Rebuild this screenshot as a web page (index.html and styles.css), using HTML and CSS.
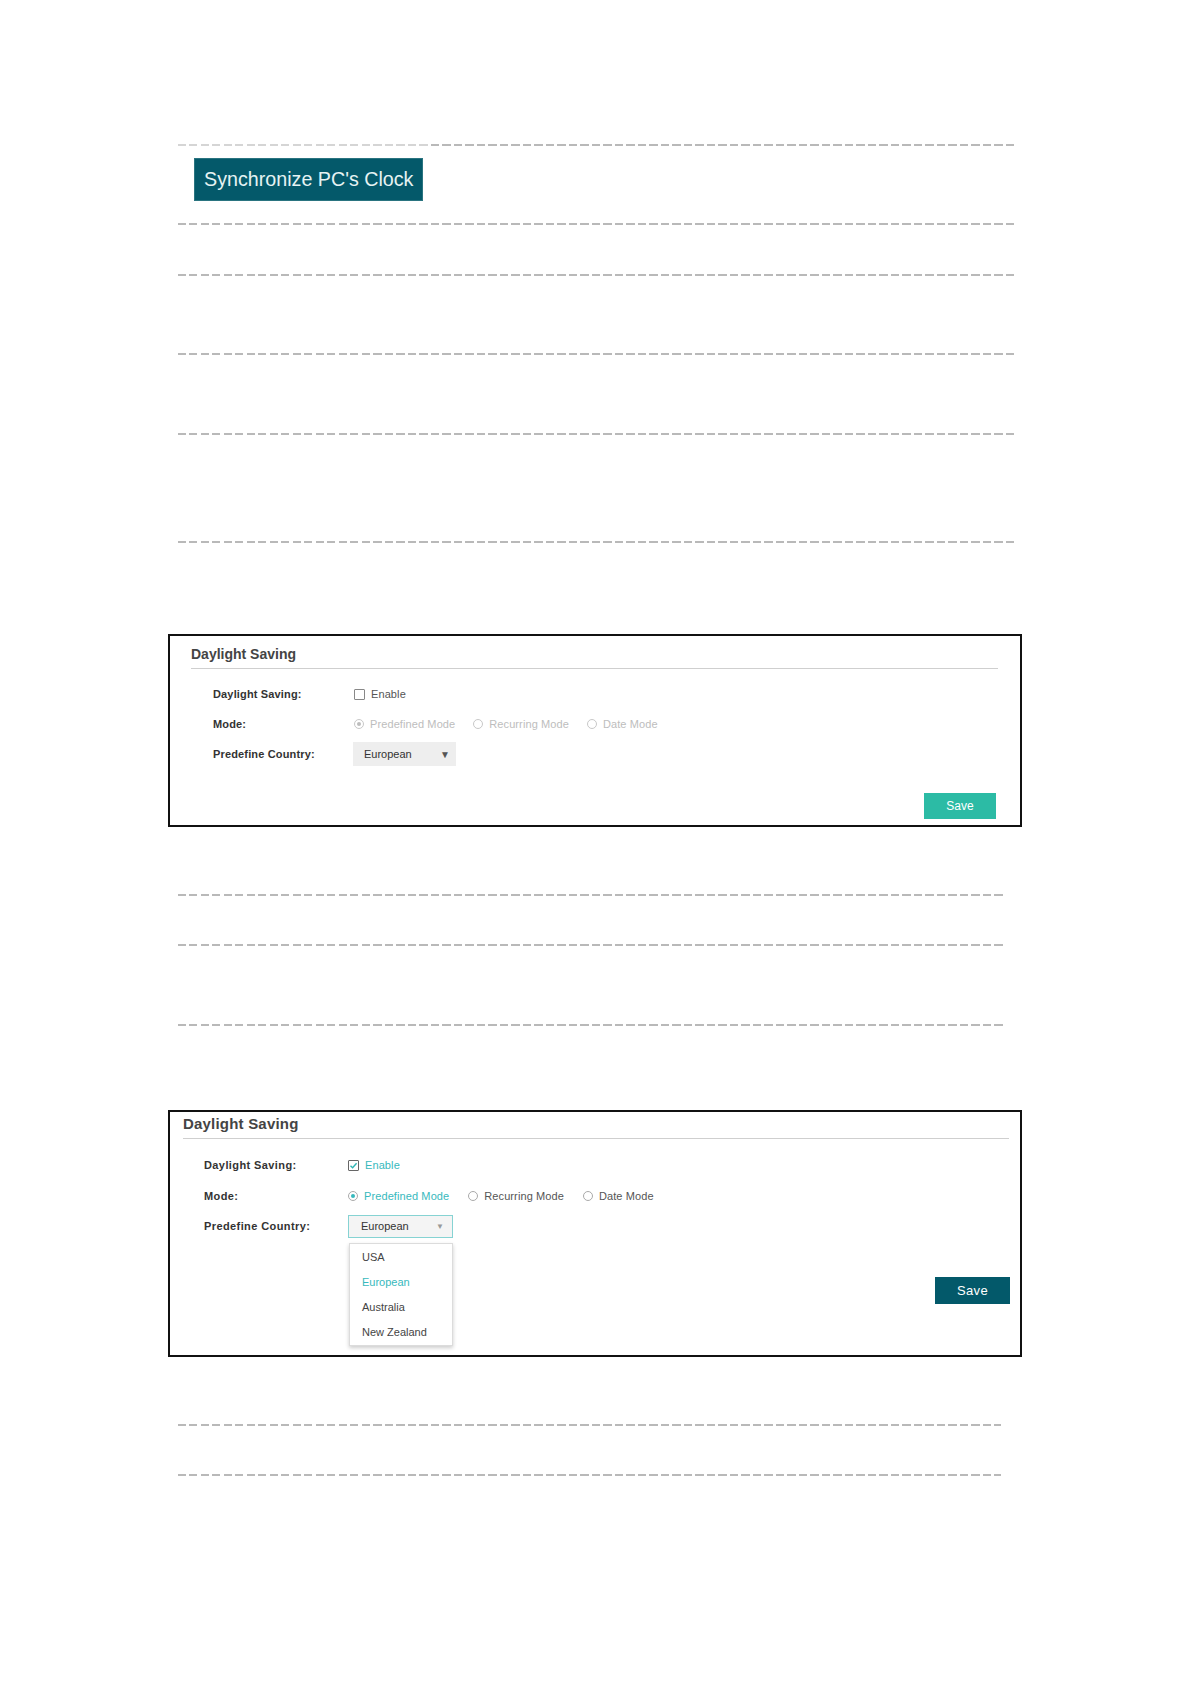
FILE: index.html
```html
<!DOCTYPE html>
<html lang="en">

<head>
    <meta charset="UTF-8">
    <meta name="viewport" content="width=device-width, initial-scale=1.0">
    <title>System Time</title>
    <link rel="stylesheet" href="styles.css">
</head>

<body>
    <div class="doc">
        <div class="dash dash-top"></div>

        <div class="sync-row">
            <button class="sync-btn">Synchronize PC's Clock</button>
        </div>

        <div class="dash gap-22"></div>
        <div class="dash gap-49"></div>
        <div class="dash gap-77"></div>
        <div class="dash gap-78"></div>
        <div class="dash dash-long gap-106"></div>

        <!-- daylight saving, disabled -->
        <div class="panel panel-off gap-91">
            <div class="panel-title">Daylight Saving</div>
            <div class="form">
                <div class="label">Daylight Saving:</div>
                <div class="field">
                    <span class="check"></span>
                    <span class="opt">Enable</span>
                </div>

                <div class="label">Mode:</div>
                <div class="field">
                    <span class="radio on"></span>
                    <span class="opt muted">Predefined Mode</span>
                    <span class="radio"></span>
                    <span class="opt muted">Recurring Mode</span>
                    <span class="radio"></span>
                    <span class="opt muted">Date Mode</span>
                </div>

                <div class="label">Predefine Country:</div>
                <div class="field">
                    <div class="select">
                        <span>European</span>
                        <span class="arrow">&#9660;</span>
                    </div>
                </div>
            </div>
            <div class="actions">
                <button class="save">Save</button>
            </div>
        </div>

        <div class="dash dash-mid gap-67"></div>
        <div class="dash dash-mid gap-48"></div>
        <div class="dash dash-mid gap-78"></div>

        <!-- daylight saving, enabled with list open -->
        <div class="panel panel-on gap-84">
            <div class="panel-title">Daylight Saving</div>
            <div class="form">
                <div class="label">Daylight Saving:</div>
                <div class="field">
                    <span class="check checked">
                        <svg width="9" height="9" viewBox="0 0 9 9"><path d="M1.5 4.8 L3.6 6.8 L7.6 2.2" fill="none" stroke="#2fb5b5" stroke-width="1.4"/></svg>
                    </span>
                    <span class="opt teal">Enable</span>
                </div>

                <div class="label">Mode:</div>
                <div class="field">
                    <span class="radio on"></span>
                    <span class="opt teal">Predefined Mode</span>
                    <span class="radio"></span>
                    <span class="opt">Recurring Mode</span>
                    <span class="radio"></span>
                    <span class="opt">Date Mode</span>
                </div>

                <div class="label">Predefine Country:</div>
                <div class="field">
                    <div class="select open">
                        <span>European</span>
                        <span class="arrow">&#9660;</span>
                        <ul class="menu">
                            <li>USA</li>
                            <li class="current">European</li>
                            <li>Australia</li>
                            <li>New Zealand</li>
                        </ul>
                    </div>
                </div>
            </div>
            <div class="actions">
                <button class="save">Save</button>
            </div>
        </div>

        <div class="dash dash-short gap-67"></div>
        <div class="dash dash-short gap-48"></div>
    </div>
</body>

</html>
```

FILE: styles.css
```css
body {
    margin: 0;
    background-color: white;
    font-family: "Liberation Sans", Arial, sans-serif;
}

.doc {
    padding: 144px 0 200px 168px;
}

.dash {
    height: 2px;
    width: 836px;
    margin-left: 10px;
    background: repeating-linear-gradient(to right, #b9b9b9 0 8px, transparent 8px 11.5px);
}

.dash-top {
    background: linear-gradient(to right, rgba(255, 255, 255, 0.4) 0 250px, transparent 250px),
        repeating-linear-gradient(to right, #b9b9b9 0 8px, transparent 8px 11.5px);
}

.dash-long {
    width: 839px;
}

.dash-mid {
    width: 826px;
}

.dash-short {
    width: 823px;
}

.gap-22 { margin-top: 22px; }
.gap-48 { margin-top: 48px; }
.gap-49 { margin-top: 49px; }
.gap-67 { margin-top: 67px; }
.gap-77 { margin-top: 77px; }
.gap-78 { margin-top: 78px; }
.gap-84 { margin-top: 84px; }
.gap-91 { margin-top: 91px; }
.gap-106 { margin-top: 106px; }

.sync-row {
    display: flex;
    margin: 12px 0 0 26px;
}

.sync-btn {
    width: 229px;
    height: 43px;
    padding: 0 0 0 9px;
    text-align: left;
    border: 1px solid #2a7480;
    background-color: #04596a;
    color: #e6f3f3;
    font-family: "Liberation Sans", Arial, sans-serif;
    font-size: 19.7px;
}

/* panels */
.panel {
    width: 854px;
    box-sizing: border-box;
    border: 2px solid #111;
    background-color: white;
    color: #333;
}

.panel-title {
    font-weight: bold;
    color: #444;
    line-height: 20px;
    border-bottom: 1px solid #cfcfcf;
}

.panel-off .panel-title {
    font-size: 14px;
    margin: 8px 22px 0 21px;
    padding-bottom: 4px;
}

.panel-on .panel-title {
    font-size: 15px;
    letter-spacing: 0.2px;
    margin: 2px 11px 0 13px;
    padding-bottom: 4px;
}

.form {
    display: grid;
    grid-template-rows: 24px 24px 24px;
    align-items: center;
}

.panel-off .form {
    grid-template-columns: 140px auto;
    row-gap: 6px;
    margin: 13px 0 0 43px;
}

.panel-on .form {
    grid-template-columns: 144px auto;
    row-gap: 6.5px;
    margin: 14px 0 0 34px;
}

.label {
    font-size: 11px;
    font-weight: bold;
    color: #333;
    letter-spacing: 0.15px;
}

.panel-on .label {
    letter-spacing: 0.4px;
}

.field {
    display: flex;
    align-items: center;
    font-size: 11px;
    color: #555;
}

.opt {
    letter-spacing: 0.1px;
    margin: 0 17px 0 6px;
}

.panel-on .opt {
    margin-right: 19px;
}

.muted {
    color: #bdbdbd;
}

.teal {
    color: #37b9bd;
}

.check {
    width: 9px;
    height: 9px;
    border: 1px solid #888;
    border-radius: 1px;
    display: flex;
    align-items: center;
    justify-content: center;
}

.panel-off .check {
    margin-left: 1px;
}

.checked {
    border-color: #666;
}

.radio {
    width: 8px;
    height: 8px;
    border: 1px solid #aaa;
    border-radius: 50%;
    display: flex;
    align-items: center;
    justify-content: center;
}

.radio.on::after {
    content: "";
    width: 4px;
    height: 4px;
    border-radius: 50%;
    background-color: #37b9bd;
}

.panel-off .radio {
    border-color: #c8c8c8;
    margin-left: 1px;
}

.panel-off .radio.on::after {
    background-color: #bdbdbd;
}

.select {
    position: relative;
    display: flex;
    align-items: center;
    justify-content: space-between;
    box-sizing: border-box;
    font-size: 11px;
    color: #333;
}

.panel-off .select {
    width: 103px;
    height: 24px;
    padding: 0 6px 0 11px;
    background-color: #eeeeee;
}

.panel-on .select {
    width: 105px;
    height: 23px;
    padding: 0 8px 0 12px;
    background-color: #f4f4f4;
    border: 1px solid #86d3d3;
}

.arrow {
    font-size: 10px;
    color: #555;
}

.open .arrow {
    font-size: 8px;
    color: #999;
}

.menu {
    position: absolute;
    top: 27px;
    left: 0;
    width: 104px;
    box-sizing: border-box;
    margin: 0;
    padding: 1px 0 0 0;
    list-style: none;
    background-color: white;
    border: 1px solid #dcdcdc;
    box-shadow: 0 2px 4px rgba(0, 0, 0, 0.2);
}

.menu li {
    height: 25px;
    line-height: 24px;
    padding-left: 12px;
    color: #444;
}

.menu .current {
    color: #37b9bd;
}

.actions {
    display: flex;
    justify-content: flex-end;
}

.save {
    border: none;
    color: white;
    font-family: "Liberation Sans", Arial, sans-serif;
}

.panel-off .actions {
    margin: 27px 24px 6px 0;
}

.panel-off .save {
    width: 72px;
    height: 26px;
    font-size: 12px;
    background-color: #2cbba5;
}

.panel-on .actions {
    margin: 39px 10px 51px 0;
}

.panel-on .save {
    width: 75px;
    height: 27px;
    font-size: 13px;
    letter-spacing: 0.3px;
    background-color: #03596a;
}
```
